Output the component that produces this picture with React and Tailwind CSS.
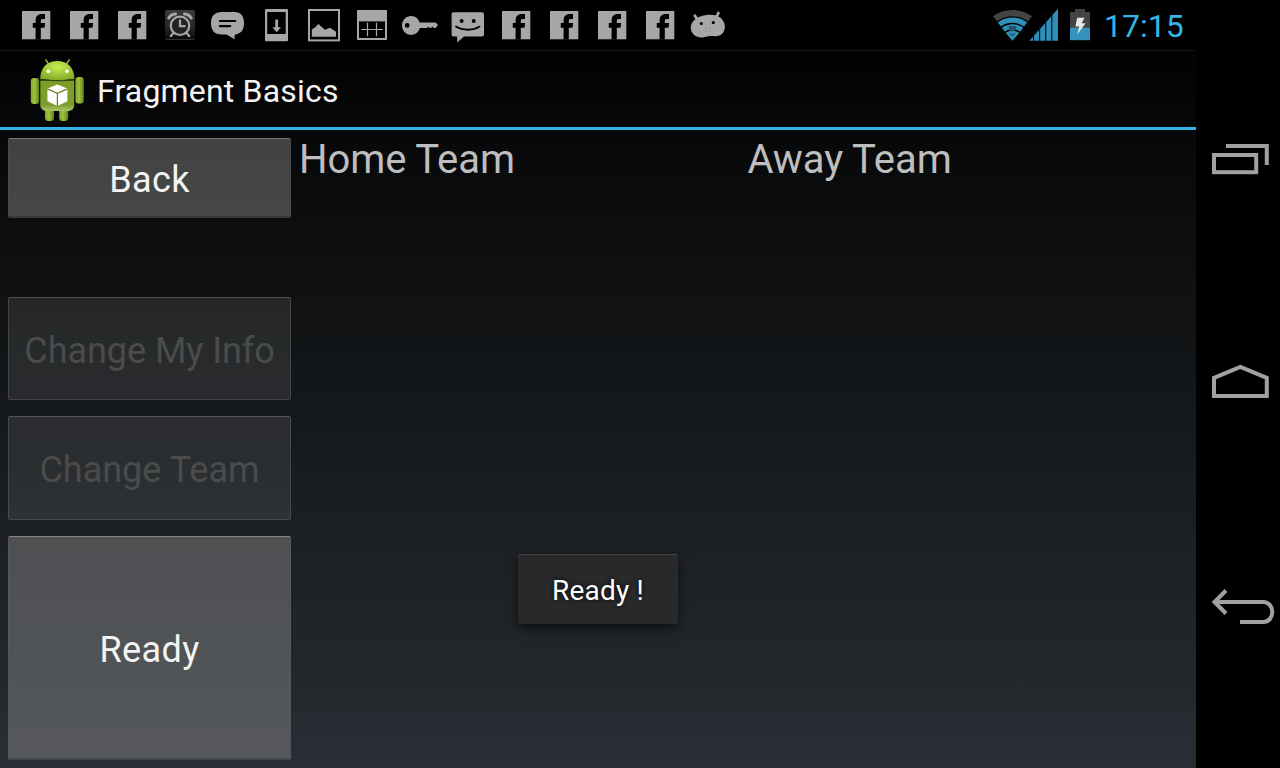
import React from "react";

const G = "#a6a6a6";

function Cell({ children }) {
  return (
    <svg className="h-[50px] w-12 shrink-0" viewBox="0 0 48 50" fill={G}>
      {children}
    </svg>
  );
}

const Facebook = () => (
  <Cell>
    <rect x="10" y="11" width="28.3" height="28.3" />
    <path
      fill="#000"
      d="M23.6 39.5V27.8H20.8V23H23.6V20.6C23.6 16.3 26 14 29.6 14H33V18.9H30.8C29.4 18.9 28.8 19.5 28.8 20.8V23H33.1L32.5 27.8H28.8V39.5Z"
    />
  </Cell>
);

const Alarm = () => (
  <Cell>
    <defs>
      <linearGradient id="alarmBg" x1="0" y1="0" x2="0" y2="1">
        <stop offset="0" stopColor="#3a3a3a" />
        <stop offset="0.6" stopColor="#262626" />
        <stop offset="1" stopColor="#080808" />
      </linearGradient>
    </defs>
    <rect x="9" y="10" width="30" height="30" rx="2" fill="url(#alarmBg)" />
    <path d="M10 39.6H38" stroke="#444" strokeWidth="0.8" />
    <circle cx="24" cy="25.8" r="9.2" fill="#222" stroke={G} strokeWidth="2.2" />
    <path
      d="M24 20.5V26.2H28.6M17.5 33L14.8 36M30.5 33L33.2 36"
      fill="none"
      stroke={G}
      strokeWidth="2.3"
      strokeLinecap="round"
    />
    <path
      d="M12.8 18C13.8 16 16.5 14.2 19.5 14M35.2 18C34.2 16 31.5 14.2 28.5 14"
      fill="none"
      stroke={G}
      strokeWidth="3"
      strokeLinecap="round"
    />
  </Cell>
);

const Chat = () => (
  <Cell>
    <path d="M18 12H30C37.5 12 40 16.5 40 23C40 28.5 38.3 32 34.5 33.5C32.4 34.4 30.6 34.3 30.6 35.5V39.3L22.5 34.6H18C10 34.6 7 30 7 23.3C7 16 10.5 12 18 12Z" />
    <path d="M15.8 21H31.2M15.8 26.1H26.3" stroke="#000" strokeWidth="2.1" strokeLinecap="round" />
  </Cell>
);

const PhoneDownload = () => (
  <Cell>
    <rect x="13" y="9" width="23" height="32.2" rx="1" />
    <rect x="15.2" y="12" width="18.5" height="22" fill="#000" />
    <path d="M23.3 19.6H26.1V27.2H29L24.7 32.3L20.4 27.2H23.3Z" />
  </Cell>
);

const Picture = () => (
  <Cell>
    <rect x="9" y="10" width="30" height="30.4" fill="none" stroke={G} strokeWidth="2" />
    <path d="M11.8 36.8V29.6L15 27.4L18.4 24L25 29.8L30 27.8L36 31.8V36.8Z" />
  </Cell>
);

const Calendar = () => (
  <Cell>
    <rect x="9" y="10" width="30" height="30" />
    <rect x="11" y="21.4" width="26" height="16.6" fill="#000" />
    <path d="M19.5 22.8V36.2M28.5 22.8V36.2M13 29.5H35" stroke={G} strokeWidth="1.2" />
  </Cell>
);

const KeyIcon = () => (
  <Cell>
    <path
      fillRule="evenodd"
      d="M15.2 16C19.3 16 22.4 18.8 23.7 22.6H39.8L42 25L39.6 28H37.8L36.4 26.6L35 28H33.6L32.2 26.8L30.8 28H23.8C22.6 32 19.4 34.8 15.2 34.8C10 34.8 6 30.6 6 25.4C6 20.2 10 16 15.2 16ZM11.2 23A2.4 2.4 0 1 0 11.2 27.8A2.4 2.4 0 1 0 11.2 23Z"
    />
  </Cell>
);

const Smiley = () => (
  <Cell>
    <path d="M9.5 12.2H38C39.2 12.2 40 13 40 14.2V34.4C40 35.6 39.2 36.4 38 36.4H20L13.2 42.6V36.4H9.5C8.3 36.4 7.6 35.6 7.6 34.4V14.2C7.6 13 8.3 12.2 9.5 12.2Z" />
    <circle cx="17.6" cy="21" r="2" fill="#000" />
    <circle cx="29.7" cy="21" r="2" fill="#000" />
    <path d="M12 26.6C18.5 30.8 29.5 30.8 35.5 26.6" fill="none" stroke="#000" strokeWidth="1.8" strokeLinecap="round" />
  </Cell>
);

const Droid = () => (
  <Cell>
    <path d="M12.2 18.4C16 15.6 26 13.4 32 15.6C38.5 17.5 41.4 23.5 40.8 28C40.2 33 36.5 36.5 31 36.2C26 35.6 23 36.4 20 37.2C13 38.6 7.4 34.5 6.8 28.5C6.5 24.2 9 20.6 12.2 18.4Z" />
    <path d="M13.6 20L10.9 15.8M32.2 17.5L34.4 13" stroke={G} strokeWidth="2.8" strokeLinecap="round" />
    <circle cx="17.3" cy="23.5" r="1.6" fill="#000" />
    <circle cx="29.3" cy="22.6" r="1.6" fill="#000" />
    <g fill="#777">
      <circle cx="21.5" cy="28.5" r="0.5" />
      <circle cx="26" cy="28.5" r="0.5" />
      <circle cx="21.5" cy="31.5" r="0.5" />
      <circle cx="26" cy="31" r="0.5" />
    </g>
  </Cell>
);

const notifications = [
  Facebook, Facebook, Facebook, Alarm, Chat, PhoneDownload, Picture,
  Calendar, KeyIcon, Smiley, Facebook, Facebook, Facebook, Facebook, Droid,
];

function SystemIcons() {
  return (
    <svg className="h-[50px] w-[100px] shrink-0" viewBox="993 0 100 50">
      <path d="M993 16.2C1004 8 1021 8 1032 16.2L1028 21.2C1019 14.6 1006 14.6 997 21.2Z" fill="#434343" />
      <path d="M997.8 22.4C1006 16 1019 16 1027.2 22.4L1024 26.6C1017.5 21.6 1007.3 21.6 1001 26.6Z" fill="#2e8fb8" />
      <path d="M1001.8 27.8C1008 23 1017 23 1023.2 27.8L1020.2 31.8C1015.6 28.2 1009.4 28.2 1004.9 31.8Z" fill="#2e8fb8" />
      <path d="M1005.7 33C1010 29.6 1014.8 29.6 1019.2 33L1012.4 40.8Z" fill="#2e8fb8" />
      <path d="M1008.3 26H1016.5L1014.8 31.3H1010Z" fill="#245467" />
      <path d="M1010 33.4L1012.4 35.4L1014.8 33.4" fill="none" stroke="#1c4a5e" strokeWidth="1.2" />
      <path d="M1029.4 40.8L1058 8.8V40.8Z" fill="#2e8fb8" />
      <path d="M1033.5 32V41M1039.6 25V41M1045.7 18V41M1051.8 12V41" stroke="#06151c" strokeWidth="1.2" />
      <path d="M1070 12H1075V9H1085V12H1090V28H1070Z" fill="#434343" />
      <rect x="1070" y="27.7" width="20" height="12.5" fill="#3594bd" />
      <path d="M1077.2 17.8H1084.6L1081.6 23.2H1085.6L1077.4 34.2L1079.2 26.4H1075.4Z" fill="#e8e8e8" />
    </svg>
  );
}

function StatusBar() {
  return (
    <div className="flex h-[50px] items-center bg-black pl-3">
      {notifications.map((Icon, i) => (
        <Icon key={i} />
      ))}
      <div className="ml-auto flex items-center pr-3">
        <SystemIcons />
        <span className="ml-[11px] w-20 whitespace-nowrap pt-0.5 text-[32px] leading-[50px] text-[#33b5e5]">
          17:15
        </span>
      </div>
    </div>
  );
}

function AppIcon() {
  return (
    <svg className="mt-0.5 h-16 w-[54px] shrink-0" viewBox="30 58 54 64">
      <defs>
        <linearGradient id="limb" x1="0" y1="0" x2="1" y2="0">
          <stop offset="0" stopColor="#85a82d" />
          <stop offset="0.45" stopColor="#9cc13a" />
          <stop offset="1" stopColor="#5f7f18" />
        </linearGradient>
        <linearGradient id="torso" x1="0" y1="0" x2="0" y2="1">
          <stop offset="0" stopColor="#7d9c26" />
          <stop offset="0.8" stopColor="#7d9e2a" />
          <stop offset="1" stopColor="#a9c76a" />
        </linearGradient>
        <radialGradient id="head" cx="0.5" cy="0.3" r="0.7">
          <stop offset="0" stopColor="#c6ee54" />
          <stop offset="1" stopColor="#86ab27" />
        </radialGradient>
      </defs>
      <path d="M45.8 59.8L49.2 65M69.2 59.8L65.8 65" stroke="#94b637" strokeWidth="1.5" strokeLinecap="round" />
      <rect x="45" y="104" width="9" height="17" rx="3.5" fill="url(#limb)" />
      <rect x="59.2" y="104" width="9" height="17" rx="3.5" fill="url(#limb)" />
      <rect x="30.8" y="78" width="8.4" height="26" rx="3" fill="url(#limb)" />
      <rect x="75.4" y="77" width="8.4" height="26.5" rx="3" fill="url(#limb)" />
      <path d="M40.3 80.4H74.2V105C74.2 108.7 71.5 111 68 111H46.8C43 111 40.3 108.7 40.3 105Z" fill="url(#torso)" />
      <path d="M40.2 78.8C40.2 68 47 61 57.3 61C67.5 61 74.4 68 74.4 78.8C66 80.4 49 80.4 40.2 78.8Z" fill="url(#head)" />
      <path d="M40.2 79.5C49 81.1 66 81.1 74.4 79.5" fill="none" stroke="#34470b" strokeWidth="1" />
      <circle cx="48.3" cy="71.2" r="1.8" fill="#fff" />
      <circle cx="67" cy="71.2" r="1.8" fill="#fff" />
      <path d="M57.4 84.4L67.4 88.4V101.2L57.4 106L47.4 101.2V88.4Z" fill="#fff" />
      <path d="M47.4 88.8L57.4 93.4L67.4 88.8M57.4 93.4V106" fill="none" stroke="#66841c" strokeWidth="1.3" />
    </svg>
  );
}

function ActionBar() {
  return (
    <header className="flex h-20 items-center border-b-[3px] border-t border-b-[#33b5e5] border-t-[#151515] pl-[30px]">
      <AppIcon />
      <h1 className="ml-[13px] mt-[3px] whitespace-nowrap text-[32px] leading-10 tracking-[0.18px] text-[#f3f3f3]">
        Fragment Basics
      </h1>
    </header>
  );
}

function Sidebar() {
  return (
    <div className="flex w-[299px] shrink-0 flex-col pl-2 pr-2 pt-2 text-[36px] leading-none">
      <button className="h-20 shrink-0 rounded-[2px] border border-b-2 border-[#4a4a4b] border-b-[#38393a] border-t-[#77777a] bg-linear-to-b from-[#424243] to-[#464746] pt-1 tracking-[0.4px] text-[#f3f3f3]">
        Back
      </button>
      <button
        disabled
        className="mt-[79px] h-[103px] shrink-0 whitespace-nowrap rounded-[2px] border border-[#434547] border-t-[#505254] bg-linear-to-b from-[#252627] via-[#272a2b] to-[#2b2b2f] pt-1 tracking-[-0.05px] text-[#4b4b4b]"
      >
        Change My Info
      </button>
      <button
        disabled
        className="mt-4 h-[104px] shrink-0 whitespace-nowrap rounded-[2px] border border-[#46494b] border-t-[#55585b] bg-linear-to-b from-[#2b2c30] via-[#2a2e30] to-[#2e3135] pt-1 text-[#4b4b4b]"
      >
        Change Team
      </button>
      <button className="mt-4 h-56 shrink-0 rounded-[2px] border border-b-2 border-[#55585a] border-b-[#44474a] border-t-[#848588] bg-linear-to-b from-[#505053] via-[#505355] to-[#56585b] pt-1 tracking-[0.4px] text-[#f3f3f3]">
        Ready
      </button>
    </div>
  );
}

function NavBar() {
  return (
    <nav className="flex w-[84px] shrink-0 flex-col bg-black">
      <svg className="h-full w-full" viewBox="1196 0 84 768" fill="none" stroke="#a1a1a1" strokeWidth="4">
        <rect x="1214" y="155" width="42.2" height="17.2" />
        <path d="M1226 146H1266.8V165" />
        <path d="M1214 396.1V377.8L1240.4 367L1266.8 377.8V396.1Z" />
        <path d="M1214.5 602H1263C1275.4 602 1275.4 622 1263 622H1240" />
        <path d="M1226 590.5L1214.5 602L1226 613.5" />
      </svg>
    </nav>
  );
}

export default function App() {
  return (
    <div className="flex h-[768px] w-[1280px] overflow-hidden bg-black font-['Roboto',sans-serif]">
      <div className="relative flex w-[1196px] shrink-0 flex-col">
        <StatusBar />
        <div className="flex flex-1 flex-col bg-[linear-gradient(to_bottom,#020203_0%,#08090b_14%,#101113_33%,#14181a_49%,#1d2125_70%,#23282b_88%,#282c35_96%,#282c35_100%)]">
          <ActionBar />
          <main className="flex flex-1">
            <Sidebar />
            <div className="flex flex-1 pt-1.5 text-[40px] leading-[48px] tracking-[-0.1px] text-[#bebebe]">
              <h2 className="flex-1">Home Team</h2>
              <h2 className="flex-1">Away Team</h2>
            </div>
          </main>
        </div>
        <div className="absolute left-[518px] top-[554px] flex h-[70px] w-40 items-center justify-center rounded-[3px] border-t border-[#454545] bg-[#292929] pt-0.5 text-[28px] tracking-[0.2px] text-white shadow-[0_4px_12px_rgba(0,0,0,0.6)] [text-shadow:0_0_4px_#000]">
          Ready !
        </div>
      </div>
      <NavBar />
    </div>
  );
}
